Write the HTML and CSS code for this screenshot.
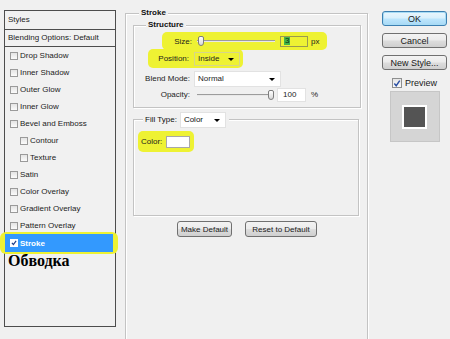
FILE: index.html
```html
<!DOCTYPE html>
<html>
<head>
<meta charset="utf-8">
<link rel="stylesheet" href="styles.css">
</head>
<body>
<div class="dialog">
  <div class="styles-list">
    <div class="list-head">Styles</div>
    <div class="list-blend">Blending Options: Default</div>
    <div class="item"><span class="cb"></span>Drop Shadow</div>
    <div class="item"><span class="cb"></span>Inner Shadow</div>
    <div class="item"><span class="cb"></span>Outer Glow</div>
    <div class="item"><span class="cb"></span>Inner Glow</div>
    <div class="item"><span class="cb"></span>Bevel and Emboss</div>
    <div class="item sub"><span class="cb"></span>Contour</div>
    <div class="item sub"><span class="cb"></span>Texture</div>
    <div class="item"><span class="cb"></span>Satin</div>
    <div class="item"><span class="cb"></span>Color Overlay</div>
    <div class="item"><span class="cb"></span>Gradient Overlay</div>
    <div class="item"><span class="cb"></span>Pattern Overlay</div>
    <div class="item sel">
      <div class="sel-inner"><span class="cb on"><svg width="8" height="8" viewBox="0 0 8 8"><path d="M1.2 3.8 L3.2 6 L6.8 1.2" fill="none" stroke="#1f3f8a" stroke-width="1.6"/></svg></span>Stroke</div>
    </div>
    <div class="caption">Обводка</div>
  </div>

  <div class="main">
    <div class="group outer">
      <div class="gtitle">Stroke</div>
      <div class="group structure">
        <div class="gtitle">Structure</div>
        <div class="row r-size">
          <div class="hl hl-size">
            <span class="lbl l-size">Size:</span>
            <div class="slider s-size"><span class="thumb"></span></div>
            <div class="field f-size"><span class="selected">3</span></div>
            <span class="unit">px</span>
          </div>
        </div>
        <div class="row r-pos">
          <div class="hl hl-pos">
            <span class="lbl l-pos">Position:</span>
            <div class="dd dd-pos clear">Inside</div>
          </div>
        </div>
        <div class="row r-blend">
          <span class="lbl l-wide">Blend Mode:</span>
          <div class="dd dd-blend">Normal</div>
        </div>
        <div class="row r-op">
          <span class="lbl l-wide">Opacity:</span>
          <div class="slider s-op"><span class="thumb"></span></div>
          <div class="field f-op">100</div>
          <span class="unit u-pct">%</span>
        </div>
      </div>
      <div class="group fill">
        <div class="gtitle ftitle">Fill Type: <div class="dd dd-fill">Color</div></div>
        <div class="hl hl-color">
          <span class="lbl-c">Color:</span>
          <span class="swatch"></span>
        </div>
      </div>
      <div class="btns">
        <div class="btn b-make">Make Default</div>
        <div class="btn b-reset">Reset to Default</div>
      </div>
    </div>
  </div>

  <div class="side">
    <div class="btn big ok">OK</div>
    <div class="btn big">Cancel</div>
    <div class="btn big">New Style...</div>
    <div class="preview-row">
      <span class="cb pv"><svg width="9" height="9" viewBox="0 0 9 9"><path d="M1.5 4.5 L3.6 7 L7.6 1.3" fill="none" stroke="#2b4fa3" stroke-width="1.6"/></svg></span>Preview
    </div>
    <div class="preview-box"><span class="preview-sq"></span></div>
  </div>
</div>
</body>
</html>
```

FILE: styles.css
```css
* { box-sizing: border-box; }
html, body { margin: 0; padding: 0; }
body {
  width: 450px;
  height: 339px;
  overflow: hidden;
  background: #f0f0f0;
  font-family: "Liberation Sans", Arial, sans-serif;
  font-size: 8px;
  color: #1c1c1c;
}
.dialog {
  display: flex;
  align-items: flex-start;
  padding-left: 4px;
  height: 339px;
}

/* ---- left styles list ---- */
.styles-list {
  width: 112px;
  height: 317px;
  margin-top: 10px;
  border: 1px solid #4d4d4d;
  background: #f1f1f1;
  flex: none;
}
.list-head {
  height: 19px;
  line-height: 18px;
  padding-left: 3px;
  border-bottom: 1px solid #4d4d4d;
}
.list-blend {
  height: 17px;
  line-height: 16px;
  padding-left: 3px;
  border-bottom: 1px solid #4d4d4d;
}
.item {
  height: 17px;
  display: flex;
  align-items: center;
  padding-left: 5px;
}
.item.sub { padding-left: 15px; }
.cb {
  width: 8px;
  height: 8px;
  margin-right: 2px;
  border: 1px solid #9a9a9a;
  background: linear-gradient(#e4e4e4, #fbfbfb);
  flex: none;
  display: flex;
  align-items: center;
  justify-content: center;
}
.cb svg { display: block; }
.item.sel {
  position: relative;
  z-index: 0;
  padding-left: 0;
  margin-top: 0;
  height: 18px;
}
.item.sel::before {
  content: "";
  position: absolute;
  left: -5px;
  right: -3px;
  top: -2px;
  bottom: -2px;
  background: #eef233;
  border-radius: 6px;
  z-index: -1;
}
.sel-inner {
  width: 108px;
  height: 18px;
  background: #3399fe;
  color: #fff;
  font-weight: bold;
  display: flex;
  align-items: center;
  padding-left: 5px;
}
.cb.on {
  background: #fff;
  border-color: #ffffff;
}
.caption {
  font-family: "Liberation Serif", "Times New Roman", serif;
  font-weight: bold;
  font-size: 16px;
  line-height: 16px;
  color: #000;
  padding-left: 3px;
  margin-top: 1px;
}

/* ---- main area ---- */
.main {
  margin-left: 9px;
  margin-top: 13px;
  width: 243px;
  flex: none;
}
.group {
  border: 1px solid #c3c3c3;
  box-shadow: 1px 1px 0 #fff, inset 1px 1px 0 #fff;
}
.outer {
  height: 340px;
  border-bottom: none;
  padding: 0 6px 0 7px;
}
.gtitle {
  width: max-content;
  font-weight: bold;
  line-height: 10px;
  height: 10px;
  margin: -6px 0 0 6px;
  padding: 0 2px;
  background: #f0f0f0;
  color: #111;
}
.structure {
  margin-top: 7px;
  height: 83px;
}
.structure .gtitle { margin-left: 12px; }

.row {
  display: flex;
  align-items: center;
}
.hl {
  display: flex;
  align-items: center;
  background: #eef233;
  border-radius: 5px;
}
.lbl {
  text-align: right;
  flex: none;
}
.r-size { margin-top: 2px; }
.hl-size {
  margin-left: 28px;
  height: 18px;
  padding-right: 8px;
}
.l-size { width: 30px; }
.slider {
  position: relative;
  height: 12px;
  flex: none;
}
.slider::before {
  content: "";
  position: absolute;
  left: 0;
  right: 0;
  top: 5px;
  border-top: 1px solid #9c9c9c;
  border-bottom: 1px solid #e8e8e8;
}
.thumb {
  position: absolute;
  top: 1px;
  width: 6px;
  height: 10px;
  border: 1px solid #7d7d7d;
  border-radius: 2px 2px 3px 3px;
  background: linear-gradient(#ffffff, #d8d8d8);
}
.s-size { width: 78px; margin-left: 5px; }
.s-size .thumb { left: 1px; }
.field {
  flex: none;
  border: 1px solid #a9a9a9;
  display: flex;
  align-items: center;
  padding-left: 3px;
}
.f-size {
  width: 28px;
  height: 11px;
  margin-left: 5px;
  border-color: #9a9a50;
}
.selected {
  background: #43b54a;
  color: #0c2a10;
  padding: 0 1px;
  line-height: 8px;
}
.unit { margin-left: 3px; width: 8px; }

.r-pos { margin-top: -1px; }
.hl-pos {
  margin-left: 14px;
  height: 19px;
  padding-right: 3px;
}
.l-pos { width: 41px; }
.dd {
  position: relative;
  flex: none;
  background: #fff;
  display: flex;
  align-items: center;
  padding-left: 3px;
  border: 1px solid #e2e2e2;
}
.dd::after {
  content: "";
  position: absolute;
  right: 5px;
  top: 50%;
  margin-top: -1px;
  border-left: 3px solid transparent;
  border-right: 3px solid transparent;
  border-top: 3px solid #000;
}
.dd.clear {
  background: transparent;
  border-color: #d6d68a;
}
.dd-pos { width: 46px; height: 14px; margin-left: 5px; }

.r-blend { margin-top: 2px; height: 17px; }
.l-wide { width: 56px; }
.dd-blend { width: 87px; height: 16px; margin-left: 4px; }

.r-op { height: 15px; }
.s-op { width: 77px; margin-left: 7px; }
.s-op .thumb { right: 0; }
.f-op {
  width: 29px;
  height: 14px;
  margin-left: 3px;
  background: #fff;
  border-color: #e2e2e2;
  padding-left: 5px;
}
.u-pct { margin-left: 5px; }

.fill {
  margin-top: 11px;
  margin-right: 2px;
  height: 97px;
}
.ftitle {
  display: flex;
  align-items: center;
  height: 16px;
  line-height: 16px;
  margin: -8px 0 0 9px;
  padding: 0 3px 0 2px;
  font-weight: normal;
}
.dd-fill {
  width: 46px;
  height: 16px;
  margin-left: 3px;
  font-weight: normal;
}
.hl-color {
  width: max-content;
  margin: 3px 0 0 4px;
  height: 21px;
  padding: 0 4px 0 3px;
}
.lbl-c { width: 25px; }
.swatch {
  width: 24px;
  height: 12px;
  background: #fff;
  border: 1px solid #a8a8a8;
}

.btns {
  display: flex;
  justify-content: center;
  gap: 13px;
  margin-top: 5px;
}
.btn {
  height: 16px;
  border: 1px solid #707070;
  border-radius: 3px;
  background: linear-gradient(#f3f3f3 0%, #ebebeb 48%, #dddddd 52%, #cfcfcf 100%);
  display: flex;
  align-items: center;
  justify-content: center;
  color: #1a1a1a;
}
.b-make { width: 55px; }
.b-reset { width: 72px; }

/* ---- right column ---- */
.side {
  margin-left: 14px;
  margin-top: 11px;
  width: 65px;
  flex: none;
  display: flex;
  flex-direction: column;
  align-items: center;
  gap: 7px;
  font-size: 9px;
}
.btn.big {
  width: 65px;
  height: 15px;
}
.btn.ok {
  border-color: #3c7fb1;
  box-shadow: inset 0 0 0 1px #a8dcf5;
  background: linear-gradient(#eaf6fd 0%, #d9f0fc 48%, #bee6fd 52%, #a7d9f5 100%);
}
.preview-row {
  display: flex;
  align-items: center;
  height: 12px;
  color: #1a1a1a;
}
.cb.pv {
  width: 10px;
  height: 10px;
  margin-right: 3px;
  border-color: #8e8f8f;
  background: linear-gradient(#e6e6e6, #fafafa);
}
.preview-box {
  margin-top: -5px;
  width: 50px;
  height: 51px;
  background: #d5d5d5;
  border: 1px solid #c6c6c6;
  display: flex;
  align-items: center;
  justify-content: center;
}
.preview-sq {
  width: 25px;
  height: 24px;
  border: 2px solid #fff;
  background: #545454;
}
```
